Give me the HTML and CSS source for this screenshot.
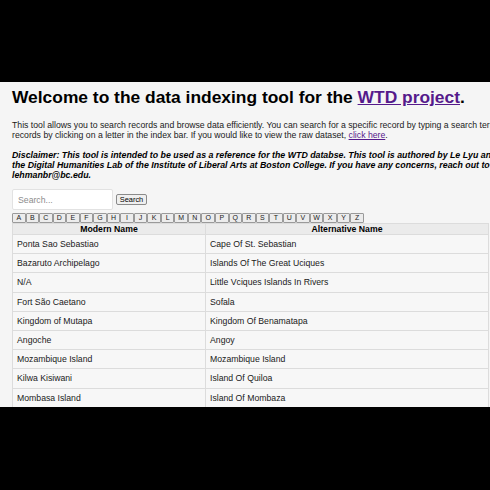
FILE: index.html
```html
<!DOCTYPE html>
<html>
<head>
<meta charset="utf-8">
<title>WTD Data Indexing Tool</title>
<link rel="stylesheet" href="styles.css">
</head>
<body>
<div class="page">
  <h1 class="title">Welcome to the data indexing tool for the <a href="#" class="link">WTD project</a>.</h1>
  <p class="intro">This tool allows you to search records and browse data efficiently. You can search for a specific record by typing a search term into the search bar, or browse<br>records by clicking on a letter in the index bar. If you would like to view the raw dataset, <a href="#" class="link">click here</a>.</p>
  <p class="disclaimer">Disclaimer: This tool is intended to be used as a reference for the WTD databse. This tool is authored by Le Lyu and Brandon Lehman with<br>the Digital Humanities Lab of the Institute of Liberal Arts at Boston College. If you have any concerns, reach out to me at<br>lehmanbr@bc.edu.</p>
  <div class="search-row">
    <input class="search-input" type="text" placeholder="Search...">
    <button class="search-btn">Search</button>
  </div>
  <div class="letters">
    <button class="letter">A</button><button class="letter">B</button><button class="letter">C</button><button class="letter">D</button><button class="letter">E</button><button class="letter">F</button><button class="letter">G</button><button class="letter">H</button><button class="letter">I</button><button class="letter">J</button><button class="letter">K</button><button class="letter">L</button><button class="letter">M</button><button class="letter">N</button><button class="letter">O</button><button class="letter">P</button><button class="letter">Q</button><button class="letter">R</button><button class="letter">S</button><button class="letter">T</button><button class="letter">U</button><button class="letter">V</button><button class="letter">W</button><button class="letter">X</button><button class="letter">Y</button><button class="letter">Z</button>
  </div>
  <table class="records">
    <thead>
      <tr><th class="col-modern">Modern Name</th><th>Alternative Name</th></tr>
    </thead>
    <tbody>
      <tr><td>Ponta Sao Sebastiao</td><td>Cape Of St. Sebastian</td></tr>
      <tr><td>Bazaruto Archipelago</td><td>Islands Of The Great Uciques</td></tr>
      <tr><td>N/A</td><td>Little Vciques Islands In Rivers</td></tr>
      <tr><td>Fort São Caetano</td><td>Sofala</td></tr>
      <tr><td>Kingdom of Mutapa</td><td>Kingdom Of Benamatapa</td></tr>
      <tr><td>Angoche</td><td>Angoy</td></tr>
      <tr><td>Mozambique Island</td><td>Mozambique Island</td></tr>
      <tr><td>Kilwa Kisiwani</td><td>Island Of Quiloa</td></tr>
      <tr><td>Mombasa Island</td><td>Island Of Mombaza</td></tr>
      <tr><td>Malindi</td><td>Melinde</td></tr>
    </tbody>
  </table>
</div>
</body>
</html>
```

FILE: styles.css
```css
html, body {
  margin: 0;
  padding: 0;
  background: #000;
  height: 100%;
}

.page {
  margin-top: 82px;
  width: 490px;
  height: 325px;
  overflow: hidden;
  background: #f5f5f5;
  padding-left: 12px;
  box-sizing: border-box;
  font-family: "Liberation Sans", Arial, sans-serif;
  color: #111;
  white-space: nowrap;
}

.title {
  margin: 5px 0 0 0;
  font-size: 17.4px;
  line-height: 20px;
  font-weight: bold;
  color: #000;
}

.link {
  color: #551a8b;
  text-decoration: underline;
}

.intro {
  margin: 13px 0 0 0;
  font-size: 8.7px;
  line-height: 10px;
  color: #1a1a1a;
}

.disclaimer {
  margin: 10px 0 0 0;
  font-size: 8.8px;
  line-height: 10px;
  font-weight: bold;
  font-style: italic;
  color: #000;
}

.search-row {
  display: flex;
  align-items: flex-end;
  margin-top: 9px;
  height: 21px;
}

.search-input {
  width: 101px;
  height: 21px;
  box-sizing: border-box;
  margin: 0;
  padding: 0 5px;
  border: 1px solid #e2e2e2;
  border-radius: 2px;
  background: #fff;
  font-family: "Liberation Sans", Arial, sans-serif;
  font-size: 8.7px;
  color: #333;
}

.search-input::placeholder {
  color: #8c8c8c;
}

.search-btn {
  margin: 0 0 5px 3px;
  height: 11px;
  width: 31px;
  padding: 0;
  box-sizing: border-box;
  border: 1px solid #8a8a8a;
  border-radius: 2px;
  background: #efefef;
  font-family: "Liberation Sans", Arial, sans-serif;
  font-size: 7.4px;
  line-height: 9px;
  color: #000;
}

.letters {
  display: flex;
  margin-top: 3px;
  width: 352px;
  height: 10px;
}

.letter {
  flex: 1 1 0;
  margin: 0;
  padding: 0;
  height: 10px;
  box-sizing: border-box;
  border: 1px solid #9a9a9a;
  border-radius: 1px;
  background: #ececec;
  font-family: "Liberation Sans", Arial, sans-serif;
  font-size: 7px;
  line-height: 8px;
  color: #222;
}

.records {
  width: 477px;
  border-collapse: collapse;
  table-layout: fixed;
  font-size: 8.7px;
}

.records th,
.records td {
  border: 1px solid #dcdcdc;
  box-sizing: border-box;
}

.records th {
  height: 11px;
  padding: 0;
  background: #ebebeb;
  font-weight: bold;
  text-align: center;
  line-height: 9px;
  color: #000;
}

.records th.col-modern {
  width: 193px;
}

.records td {
  height: 19.2px;
  padding: 0 4px;
  background: #f7f7f7;
  color: #1a1a1a;
  line-height: 10px;
}
```
